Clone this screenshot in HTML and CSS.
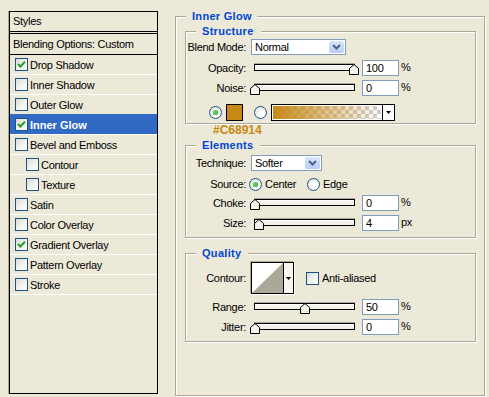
FILE: index.html
```html
<!DOCTYPE html>
<html>
<head>
<meta charset="utf-8">
<link rel="stylesheet" href="styles.css">
</head>
<body>
<div class="dialog">
  <div class="styles-panel">
    <div class="panel-head">Styles</div>
    <div class="panel-blend">Blending Options: Custom</div>
    <ul class="style-list">
      <li class="style-item"><span class="cb"><svg viewBox="0 0 11 11" width="11" height="11"><path d="M2 5 L4.3 7.5 L9 2.8" fill="none" stroke="#21A121" stroke-width="2"/></svg></span><span>Drop Shadow</span></li>
      <li class="style-item"><span class="cb"></span><span>Inner Shadow</span></li>
      <li class="style-item"><span class="cb"></span><span>Outer Glow</span></li>
      <li class="style-item selected"><span class="cb"><svg viewBox="0 0 11 11" width="11" height="11"><path d="M2 5 L4.3 7.5 L9 2.8" fill="none" stroke="#21A121" stroke-width="2"/></svg></span><span>Inner Glow</span></li>
      <li class="style-item"><span class="cb"></span><span>Bevel and Emboss</span></li>
      <li class="style-item sub"><span class="cb"></span><span>Contour</span></li>
      <li class="style-item sub"><span class="cb"></span><span>Texture</span></li>
      <li class="style-item"><span class="cb"></span><span>Satin</span></li>
      <li class="style-item"><span class="cb"></span><span>Color Overlay</span></li>
      <li class="style-item"><span class="cb"><svg viewBox="0 0 11 11" width="11" height="11"><path d="M2 5 L4.3 7.5 L9 2.8" fill="none" stroke="#21A121" stroke-width="2"/></svg></span><span>Gradient Overlay</span></li>
      <li class="style-item"><span class="cb"></span><span>Pattern Overlay</span></li>
      <li class="style-item"><span class="cb"></span><span>Stroke</span></li>
    </ul>
  </div>

  <fieldset class="group group-outer">
    <legend class="legend-outer">Inner Glow</legend>

    <fieldset class="group group-inner structure">
      <legend class="legend-inner">Structure</legend>
      <div class="row">
        <span class="lbl">Blend Mode:</span>
        <div class="combo combo-blend"><span class="combo-text">Normal</span><span class="combo-btn"><svg viewBox="0 0 15 12" width="15" height="12"><path d="M4 4 L7.5 7.5 L11 4" fill="none" stroke="#4D6185" stroke-width="2"/></svg></span></div>
      </div>
      <div class="row r-opacity">
        <span class="lbl">Opacity:</span>
        <div class="slider"><div class="track"></div><svg class="thumb" style="left:99px" viewBox="0 0 10 11" width="10" height="11"><path d="M0.5 10.5 V4.5 L5 0.5 L9.5 4.5 V10.5 Z" fill="#F4F3EE" stroke="#000"/></svg></div>
        <div class="num">100</div><span class="unit">%</span>
      </div>
      <div class="row r-noise">
        <span class="lbl">Noise:</span>
        <div class="slider"><div class="track"></div><svg class="thumb" style="left:0px" viewBox="0 0 10 11" width="10" height="11"><path d="M0.5 10.5 V4.5 L5 0.5 L9.5 4.5 V10.5 Z" fill="#F4F3EE" stroke="#000"/></svg></div>
        <div class="num">0</div><span class="unit">%</span>
      </div>
      <div class="row r-swatch">
        <span class="radio checked"></span>
        <span class="swatch"></span>
        <span class="radio radio-2"></span>
        <div class="grad"><span class="grad-fill"></span><span class="grad-arrow"><svg viewBox="0 0 5 3" width="5" height="3"><path d="M0 0 H5 L2.5 3 Z" fill="#000"/></svg></span></div>
      </div>
    </fieldset>

    <div class="hex-note">#C68914</div>

    <fieldset class="group group-inner elements">
      <legend class="legend-inner">Elements</legend>
      <div class="row">
        <span class="lbl">Technique:</span>
        <div class="combo combo-tech"><span class="combo-text">Softer</span><span class="combo-btn"><svg viewBox="0 0 15 12" width="15" height="12"><path d="M4 4 L7.5 7.5 L11 4" fill="none" stroke="#4D6185" stroke-width="2"/></svg></span></div>
      </div>
      <div class="row r-source">
        <span class="lbl">Source:</span>
        <span class="radio checked src-radio-1"></span><span class="src-text src-center">Center</span>
        <span class="radio"></span><span class="src-text">Edge</span>
      </div>
      <div class="row r-choke">
        <span class="lbl">Choke:</span>
        <div class="slider"><div class="track"></div><svg class="thumb" style="left:0px" viewBox="0 0 10 11" width="10" height="11"><path d="M0.5 10.5 V4.5 L5 0.5 L9.5 4.5 V10.5 Z" fill="#F4F3EE" stroke="#000"/></svg></div>
        <div class="num">0</div><span class="unit">%</span>
      </div>
      <div class="row r-size">
        <span class="lbl">Size:</span>
        <div class="slider"><div class="track"></div><svg class="thumb" style="left:4px" viewBox="0 0 10 11" width="10" height="11"><path d="M0.5 10.5 V4.5 L5 0.5 L9.5 4.5 V10.5 Z" fill="#F4F3EE" stroke="#000"/></svg></div>
        <div class="num">4</div><span class="unit">px</span>
      </div>
    </fieldset>

    <fieldset class="group group-inner quality">
      <legend class="legend-inner">Quality</legend>
      <div class="row r-contour">
        <span class="lbl">Contour:</span>
        <div class="contour">
          <svg class="contour-prev" viewBox="0 0 31 30" width="31" height="30"><rect width="31" height="30" fill="#fff"/><path d="M0 30 L31 0 V30 Z" fill="#ACA899"/></svg>
          <span class="contour-arrow"><svg viewBox="0 0 5 3" width="5" height="3"><path d="M0 0 H5 L2.5 3 Z" fill="#000"/></svg></span>
        </div>
        <span class="cb aa-cb"></span><span class="aa-text">Anti-aliased</span>
      </div>
      <div class="row r-range">
        <span class="lbl">Range:</span>
        <div class="slider"><div class="track"></div><svg class="thumb" style="left:50px" viewBox="0 0 10 11" width="10" height="11"><path d="M0.5 10.5 V4.5 L5 0.5 L9.5 4.5 V10.5 Z" fill="#F4F3EE" stroke="#000"/></svg></div>
        <div class="num">50</div><span class="unit">%</span>
      </div>
      <div class="row r-jitter">
        <span class="lbl">Jitter:</span>
        <div class="slider"><div class="track"></div><svg class="thumb" style="left:0px" viewBox="0 0 10 11" width="10" height="11"><path d="M0.5 10.5 V4.5 L5 0.5 L9.5 4.5 V10.5 Z" fill="#F4F3EE" stroke="#000"/></svg></div>
        <div class="num">0</div><span class="unit">%</span>
      </div>
    </fieldset>
  </fieldset>
</div>
</body>
</html>
```
FILE: styles.css
```css
html, body {
  margin: 0;
  padding: 0;
}
body {
  background: #ECE9D8;
  font-family: "Liberation Sans", Arial, sans-serif;
  font-size: 11px;
  letter-spacing: -0.3px;
  color: #000;
  width: 489px;
  height: 397px;
  overflow: hidden;
}
.dialog {
  display: flex;
  align-items: flex-start;
}

/* Left styles list */
.styles-panel {
  margin: 11px 0 0 9px;
  width: 149px;
  height: 383px;
  box-sizing: border-box;
  border: 1px solid #000;
  box-shadow: -1px 0 0 #ACA899;
  flex: none;
}
.panel-head {
  height: 19px;
  line-height: 19px;
  padding-left: 3px;
  border-bottom: 3px double #000;
}
.panel-blend {
  height: 20px;
  line-height: 20px;
  padding-left: 3px;
  border-bottom: 1px solid #000;
}
.style-list {
  list-style: none;
  margin: 0;
  padding: 0;
}
.style-item {
  height: 19px;
  display: flex;
  align-items: center;
  padding-left: 5px;
  border-top: 1px solid #fff;
}
.style-item:first-child {
  border-top: none;
}
.style-item:last-child {
  border-bottom: 1px solid #fff;
}
.style-item.sub {
  padding-left: 16px;
}
.style-item.selected {
  background: #316AC5;
  border-top-color: #316AC5;
  color: #fff;
  font-weight: bold;
  letter-spacing: 0;
}
.cb {
  width: 13px;
  height: 13px;
  box-sizing: border-box;
  border: 1px solid #1C5180;
  background: linear-gradient(135deg, #DCDCD7 0%, #F4F4F0 60%, #fff 100%);
  display: flex;
  flex: none;
  margin-right: 2px;
}

/* Group boxes */
.group {
  margin: 0;
  border: 1px solid #ACA899;
  box-shadow: inset 1px 1px 0 #fff, 1px 1px 0 #fff;
  min-width: 0;
}
.group legend {
  line-height: 12px;
  font-weight: bold;
  letter-spacing: 0.3px;
  color: #0046D5;
  background: #ECE9D8;
}
.group-outer {
  margin: 10px 0 0 17px;
  width: 310px;
  height: 386px;
  box-sizing: border-box;
  padding: 3px 0 0 9px;
  flex: none;
}
.legend-outer {
  margin-left: 1px;
  padding: 0 5px 0 6px;
}
.group-inner {
  width: 291px;
  box-sizing: border-box;
  padding: 0;
}
.legend-inner {
  margin-left: 10px;
  padding: 0 7px 0 6px;
}
.structure {
  padding: 2px 0 2px 0;
}
.elements {
  margin-top: 3px;
  padding: 4px 0 6px 0;
}
.quality {
  margin-top: 9px;
  padding: 3px 0 6px 0;
}

.hex-note {
  height: 12px;
  line-height: 12px;
  margin-left: 28px;
  font-weight: bold;
  font-size: 12px;
  letter-spacing: 0;
  color: #C68914;
}

/* Rows */
.row {
  display: flex;
  align-items: center;
  height: 16px;
}
.lbl {
  width: 60px;
  text-align: right;
  flex: none;
}
.r-opacity { margin-top: 5px; }
.r-noise { margin-top: 4px; }
.r-swatch { margin-top: 8px; height: 17px; padding-left: 23px; }
.r-source { margin-top: 5px; }
.r-choke { margin-top: 3px; }
.r-size { margin-top: 4px; }
.r-contour { height: 32px; }
.r-range { margin-top: 5px; }
.r-jitter { margin-top: 4px; }

/* Combo box */
.combo {
  display: flex;
  align-items: center;
  height: 16px;
  box-sizing: border-box;
  border: 1px solid #7F9DB9;
  background: #fff;
  margin-left: 5px;
  flex: none;
}
.combo-blend { width: 95px; }
.combo-tech { width: 71px; }
.combo-text {
  padding-left: 3px;
}
.combo-btn {
  margin-left: auto;
  margin-right: 1px;
  width: 15px;
  height: 12px;
  border-radius: 2px;
  background: linear-gradient(#D9E5FD, #B9CEF8);
  display: flex;
  align-items: center;
  justify-content: center;
}
.combo-btn svg {
  display: block;
}

/* Sliders */
.slider {
  position: relative;
  width: 109px;
  height: 16px;
  margin-left: 4px;
  flex: none;
}
.track {
  margin: 4px 0 0 4px;
  width: 101px;
  height: 7px;
  box-sizing: border-box;
  border: 1px solid #000;
  background: #F3F2EA;
  box-shadow: inset 1px 1px 0 #fff, 0 -1px 0 #ACA899;
}
.thumb {
  position: absolute;
  top: 4px;
  display: block;
}
.num {
  width: 37px;
  height: 16px;
  box-sizing: border-box;
  border: 1px solid #7F9DB9;
  background: #fff;
  padding-left: 3px;
  line-height: 14px;
  margin-left: 3px;
  flex: none;
}
.unit {
  margin-left: 2px;
  align-self: flex-start;
  line-height: 12px;
  margin-top: 1px;
}

/* Radios */
.radio {
  width: 13px;
  height: 13px;
  box-sizing: border-box;
  border: 1px solid #1C5180;
  border-radius: 50%;
  background: radial-gradient(circle at 65% 65%, #fff 20%, #E2E2DC 90%);
  flex: none;
  display: flex;
  align-items: center;
  justify-content: center;
}
.radio.checked::after {
  content: "";
  width: 5px;
  height: 5px;
  border-radius: 50%;
  background: radial-gradient(circle at 40% 40%, #5BE05B, #21A121);
}
.swatch {
  width: 17px;
  height: 17px;
  box-sizing: border-box;
  border: 1px solid #000;
  background: #C68914;
  margin-left: 4px;
  flex: none;
}
.radio-2 {
  margin-left: 11px;
}
.grad {
  display: flex;
  width: 124px;
  height: 17px;
  box-sizing: border-box;
  border: 1px solid #000;
  margin-left: 4px;
  background: #fff;
  flex: none;
}
.grad-fill {
  flex: 1;
  margin: 1px;
  background:
    linear-gradient(to right, #C68914, rgba(198, 137, 20, 0)),
    conic-gradient(#CFCFCF 25%, #fff 0 50%, #CFCFCF 0 75%, #fff 0) 0 0 / 8px 8px;
}
.grad-arrow {
  width: 11px;
  border-left: 1px solid #000;
  display: flex;
  align-items: center;
  justify-content: center;
}
.grad-arrow svg, .contour-arrow svg {
  display: block;
}

.src-radio-1 {
  margin-left: 3px;
}
.src-text {
  margin-left: 3px;
}
.src-center {
  width: 42px;
  flex: none;
}

/* Contour */
.contour {
  display: flex;
  width: 43px;
  height: 32px;
  box-sizing: border-box;
  border: 1px solid #000;
  box-shadow: -1px -1px 0 #ACA899, 1px 1px 0 #fff;
  margin-left: 5px;
  background: #F6F5EF;
  flex: none;
}
.contour-prev {
  display: block;
}
.contour-arrow {
  flex: 1;
  border-left: 1px solid #000;
  display: flex;
  align-items: center;
  justify-content: center;
}
.aa-cb {
  margin-left: 12px;
  margin-right: 0;
}
.aa-text {
  margin-left: 3px;
}
```
